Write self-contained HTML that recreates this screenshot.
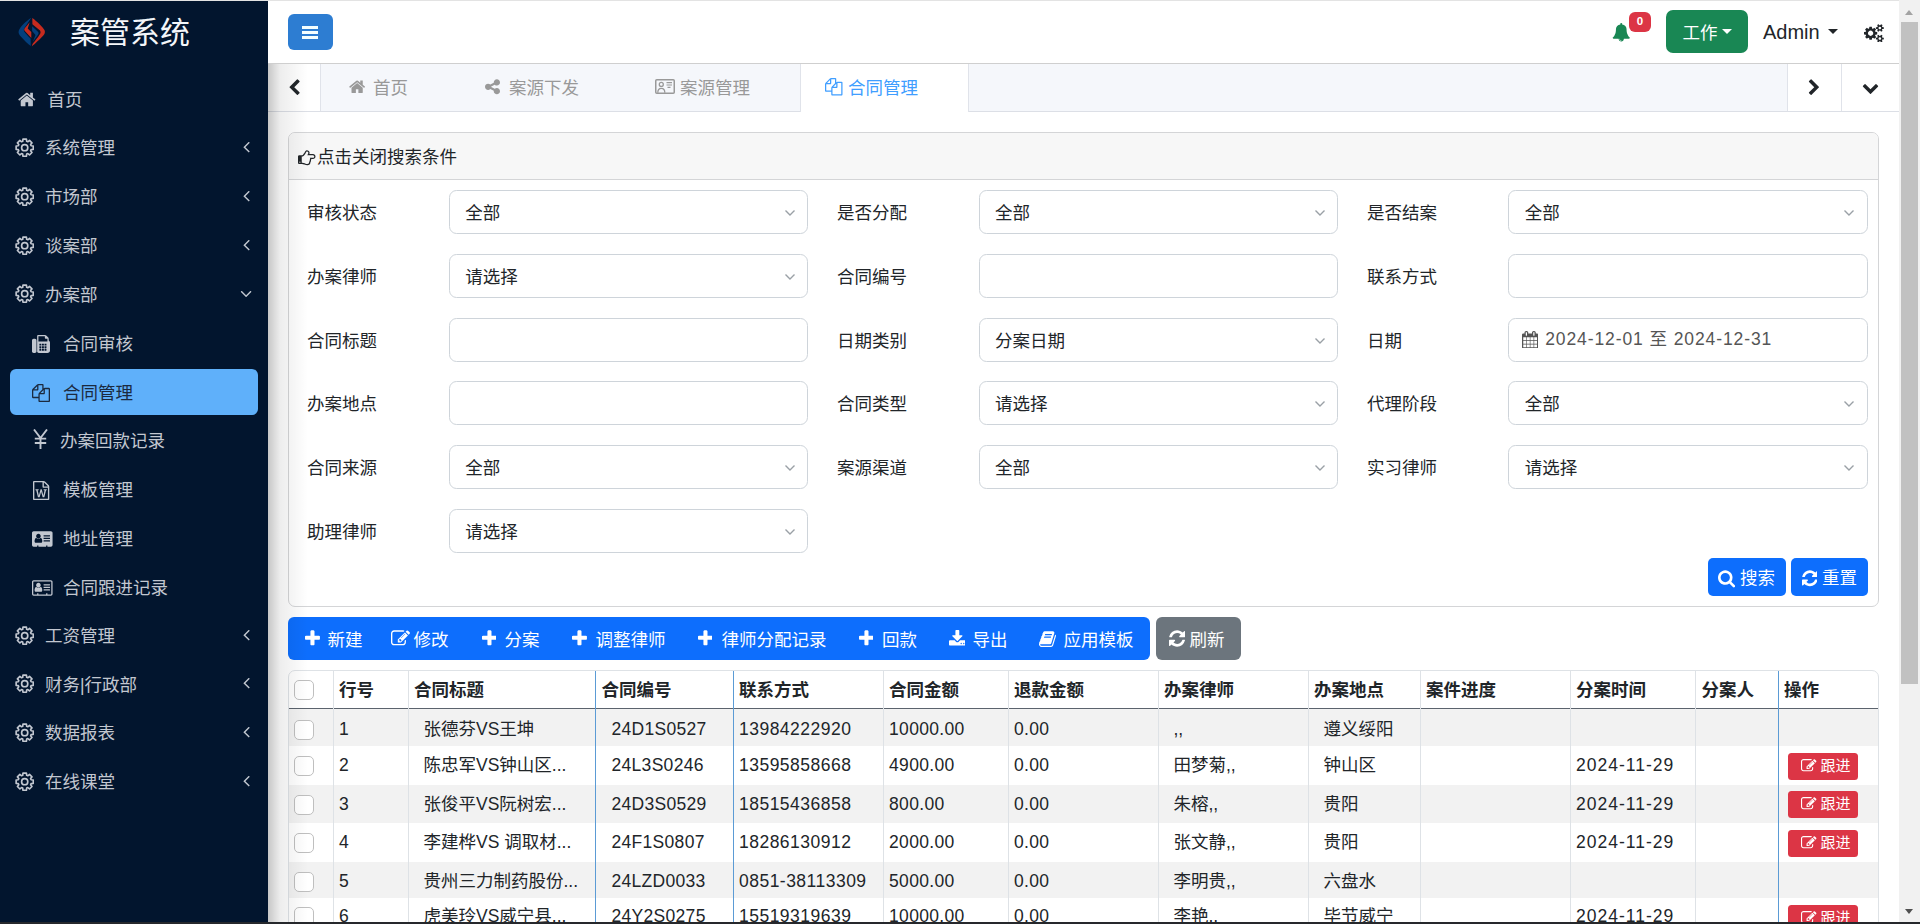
<!DOCTYPE html><html lang="zh-CN"><head><meta charset="utf-8"><title>案管系统</title><style>
*{box-sizing:border-box;margin:0;padding:0}
html,body{width:1920px;height:924px;overflow:hidden;background:#fff}
body{font-family:"Liberation Sans","Noto Sans CJK SC",sans-serif;font-size:17.5px;color:#212529;position:relative}
svg.fa{display:inline-block;vertical-align:middle;flex:none}
.abs{position:absolute}
.tx{margin-top:1px}
#topline{left:0;top:0;width:1920px;height:1px;background:#e3e3e3;z-index:50}
#side{left:0;top:0;width:268px;height:924px;background:#02152e;color:#c2c7d0;z-index:5}
#shadow{left:268px;top:64px;width:40px;height:861px;background:linear-gradient(90deg,rgba(0,0,0,.22),rgba(0,0,0,.07) 30%,rgba(0,0,0,0) 100%);z-index:8;pointer-events:none}
#brand{left:70px;top:11px;font-size:30px;color:#f4f6f9;line-height:44px;white-space:nowrap}
.nav{left:0;width:268px;height:48.75px;display:flex;align-items:center;white-space:nowrap}
.nav .t{position:absolute;top:0;line-height:48.75px}
.nav .ic{position:absolute;top:0;height:48.75px;display:flex;align-items:center}
.nav .arr{position:absolute;left:243.3px;top:-1px;height:48.75px;display:flex;align-items:center}
#act{left:10px;top:369px;width:248px;height:46px;border-radius:6px;background:#5fb0fa}
#hdr{left:268px;top:1px;width:1631px;height:62px;background:#fff;z-index:10}
#hdrline{left:268px;top:63px;width:1631px;height:1px;background:#cfcfcf;z-index:11}
#burger{left:288px;top:14px;width:45px;height:36px;border-radius:6px;background:#2d7dd2;z-index:12}
#burger i{position:absolute;left:14px;width:16px;height:3px;background:#f4ffff;display:block}
#tabs{left:268px;top:64px;width:1631px;height:47px;background:#f5f7fb;z-index:3}
#tabline{left:268px;top:111px;width:1631px;height:1px;background:#dcdfe6;z-index:3}
.tab{top:64px;height:47px;line-height:47px;color:#999;white-space:nowrap;z-index:6}

.hi{z-index:12}
#bell{left:1611.5px;top:21px;color:#198754}
#badge{left:1629px;top:12px;width:22px;height:20px;border-radius:6px;background:#dc3545;color:#fff;font-weight:bold;font-size:11.5px;line-height:18px;text-align:center}
#work{left:1666px;top:10px;width:82px;height:43px;border-radius:7px;background:#198754;color:#fff;line-height:43px;white-space:nowrap}
#work span{position:absolute;left:16.5px;top:1.5px}
#admin{left:1763px;top:11px;font-size:20px;line-height:43px;color:#212529;white-space:nowrap}
.caret{width:0;height:0;border-left:5px solid transparent;border-right:5px solid transparent;border-top:5px solid currentColor}
.vsep{top:64px;width:1px;height:47px;background:#e0e3ea;z-index:6}
.tw{top:64px;height:47px;background:#fff;z-index:5}
.tab svg{margin-right:0}
#panel{left:288px;top:132px;width:1591px;height:475px;border:1px solid #d4d5d7;border-radius:7px;background:#fff;z-index:1;overflow:hidden}
#phead{left:0;top:0;width:100%;height:47px;background:#f7f7f7;border-bottom:1px solid #d4d5d7}
.lbl{line-height:44px;white-space:nowrap;z-index:2;color:#212529}
.inp{width:359.4px;height:44px;border:1px solid #ced4da;border-radius:7.5px;background:#fff;z-index:2;line-height:42px;white-space:nowrap;color:#212529}
.inp .v{position:absolute;left:15.5px;top:1px}
.inp .chev{position:absolute;right:11.3px;top:18px;width:12px;height:8px}
.btn{z-index:2;border-radius:5px;color:#fff;white-space:nowrap}

#tbblue{left:288px;top:617px;width:862px;height:43px;border-radius:6px;background:#0d6efd;z-index:2}
#tbgray{left:1156px;top:617px;width:85px;height:43px;border-radius:6px;background:#6c757d;z-index:2}
.tbi{top:617px;height:43px;line-height:43px;color:#fff;z-index:3;white-space:nowrap}
#tbl{left:288px;top:670px;width:1591px;height:300px;border:1px solid #dee2e6;border-radius:7px 7px 0 0;z-index:1;background:#fff;overflow:hidden}
.row{left:0;width:1589px}
.thl{left:0;top:36.5px;width:1589px;height:1.7px;background:#5b636d}
.vl{top:0;width:1px;height:300px;background:#dee2e6;z-index:2}
.vb{background:#5b9bd5}
.th{top:671px;height:38px;line-height:38px;font-weight:bold;color:#212529;z-index:3;white-space:nowrap}
.td{height:36px;line-height:36px;color:#212529;z-index:3;white-space:nowrap}
.cb{left:294px;width:20px;height:20px;border:1px solid #bfbfbf;border-radius:5px;background:#fff;z-index:3}
.gj{left:1788px;width:70px;height:27px;border-radius:3.5px;background:#dc3545;color:#fff;font-size:15px;line-height:27px;z-index:3;white-space:nowrap}
#sb{left:1899px;top:0;width:21px;height:924px;background:#f1f1f1;z-index:60}
#sbt{left:1901px;top:22px;width:17px;height:662px;background:#c1c1c1;z-index:61}
#bottomline{left:0;top:922px;width:1920px;height:2px;background:#26282c;z-index:70}
</style></head><body><div id="topline" class="abs"></div><div id="side" class="abs"><svg class="abs" style="left:10px;top:8px" width="50" height="48" viewBox="0 0 50 48"><path fill="#043f7c" d="M21.3 9.7 C16 13 10 19 8.8 22.5 C8.1 25 9 26.7 11 28.7 C14 32 18 36 20.8 38.1 L20.6 30.5 C18 28 15.5 25.5 14.2 23.5 Q13.3 22 14.3 20.3 Z"/><path fill="#c62b1f" d="M22.3 9.9 C27 13.3 33 19 34.6 22.3 C35.4 24.5 34.6 26 33.1 27.8 C30 31 25 36 21.8 38.4 L22.5 36 C25 33 29 28 30.3 25.5 Q31 24 30 22.5 L22.4 16.2 Z"/><path fill="#c62b1f" d="M19.7 14.3 L14.5 20.5 Q13.8 21.7 14.6 22.8 L21.3 30.1 L21.3 24 L17.7 20.5 Z"/><path fill="#043f7c" d="M22.1 18.2 L28.2 24 Q29 25 28.3 26.2 L22.9 33.8 L25.5 27 L22.1 22.9 Z"/></svg><div id="brand" class="abs">案管系统</div><div id="act" class="abs"></div><div class="nav abs" style="top:74.60px;color:#c2c7d0"><span class="ic" style="left:18px;top:1px"><svg class="fa" width="17.64" height="19" viewBox="0 -1536 1664 1792" style=""><path fill="currentColor" transform="scale(1,-1)" d="M1408 544v-480q0 -26 -19 -45t-45 -19h-384v384h-256v-384h-384q-26 0 -45 19t-19 45v480q0 1 0.5 3t0.5 3l575 474l575 -474q1 -2 1 -6zM1631 613l-62 -74q-8 -9 -21 -11h-3q-13 0 -21 7l-692 577l-692 -577q-12 -8 -24 -7q-13 2 -21 11l-62 74q-8 10 -7 23.5t11 21.5 l719 599q32 26 76 26t76 -26l244 -204v195q0 14 9 23t23 9h192q14 0 23 -9t9 -23v-408l219 -182q10 -8 11 -21.5t-7 -23.5z"/></svg></span><span class="t tx" style="left:47.5px">首页</span></div><div class="nav abs" style="top:123.35px;color:#c2c7d0"><span class="ic" style="left:15px"><svg class="gear" width="19.4" height="19.4" viewBox="0 0 20 20"><path d="M7.96 3.41 L8.21 1.18 L11.79 1.18 L12.04 3.41 L13.22 3.90 L14.97 2.50 L17.50 5.03 L16.10 6.78 L16.59 7.96 L18.82 8.21 L18.82 11.79 L16.59 12.04 L16.10 13.22 L17.50 14.97 L14.97 17.50 L13.22 16.10 L12.04 16.59 L11.79 18.82 L8.21 18.82 L7.96 16.59 L6.78 16.10 L5.03 17.50 L2.50 14.97 L3.90 13.22 L3.41 12.04 L1.18 11.79 L1.18 8.21 L3.41 7.96 L3.90 6.78 L2.50 5.03 L5.03 2.50 L6.78 3.90Z" fill="none" stroke="currentColor" stroke-width="1.7" stroke-linejoin="round"/><circle cx="10" cy="10" r="3.2" fill="none" stroke="currentColor" stroke-width="1.7"/></svg></span><span class="t tx" style="left:45px">系统管理</span><span class="arr"><svg class="fa" width="6.79" height="19" viewBox="0 -1536 640 1792" style=""><path fill="currentColor" transform="scale(1,-1)" d="M627 992q0 -13 -10 -23l-393 -393l393 -393q10 -10 10 -23t-10 -23l-50 -50q-10 -10 -23 -10t-23 10l-466 466q-10 10 -10 23t10 23l466 466q10 10 23 10t23 -10l50 -50q10 -10 10 -23z"/></svg></span></div><div class="nav abs" style="top:172.10px;color:#c2c7d0"><span class="ic" style="left:15px"><svg class="gear" width="19.4" height="19.4" viewBox="0 0 20 20"><path d="M7.96 3.41 L8.21 1.18 L11.79 1.18 L12.04 3.41 L13.22 3.90 L14.97 2.50 L17.50 5.03 L16.10 6.78 L16.59 7.96 L18.82 8.21 L18.82 11.79 L16.59 12.04 L16.10 13.22 L17.50 14.97 L14.97 17.50 L13.22 16.10 L12.04 16.59 L11.79 18.82 L8.21 18.82 L7.96 16.59 L6.78 16.10 L5.03 17.50 L2.50 14.97 L3.90 13.22 L3.41 12.04 L1.18 11.79 L1.18 8.21 L3.41 7.96 L3.90 6.78 L2.50 5.03 L5.03 2.50 L6.78 3.90Z" fill="none" stroke="currentColor" stroke-width="1.7" stroke-linejoin="round"/><circle cx="10" cy="10" r="3.2" fill="none" stroke="currentColor" stroke-width="1.7"/></svg></span><span class="t tx" style="left:45px">市场部</span><span class="arr"><svg class="fa" width="6.79" height="19" viewBox="0 -1536 640 1792" style=""><path fill="currentColor" transform="scale(1,-1)" d="M627 992q0 -13 -10 -23l-393 -393l393 -393q10 -10 10 -23t-10 -23l-50 -50q-10 -10 -23 -10t-23 10l-466 466q-10 10 -10 23t10 23l466 466q10 10 23 10t23 -10l50 -50q10 -10 10 -23z"/></svg></span></div><div class="nav abs" style="top:220.85px;color:#c2c7d0"><span class="ic" style="left:15px"><svg class="gear" width="19.4" height="19.4" viewBox="0 0 20 20"><path d="M7.96 3.41 L8.21 1.18 L11.79 1.18 L12.04 3.41 L13.22 3.90 L14.97 2.50 L17.50 5.03 L16.10 6.78 L16.59 7.96 L18.82 8.21 L18.82 11.79 L16.59 12.04 L16.10 13.22 L17.50 14.97 L14.97 17.50 L13.22 16.10 L12.04 16.59 L11.79 18.82 L8.21 18.82 L7.96 16.59 L6.78 16.10 L5.03 17.50 L2.50 14.97 L3.90 13.22 L3.41 12.04 L1.18 11.79 L1.18 8.21 L3.41 7.96 L3.90 6.78 L2.50 5.03 L5.03 2.50 L6.78 3.90Z" fill="none" stroke="currentColor" stroke-width="1.7" stroke-linejoin="round"/><circle cx="10" cy="10" r="3.2" fill="none" stroke="currentColor" stroke-width="1.7"/></svg></span><span class="t tx" style="left:45px">谈案部</span><span class="arr"><svg class="fa" width="6.79" height="19" viewBox="0 -1536 640 1792" style=""><path fill="currentColor" transform="scale(1,-1)" d="M627 992q0 -13 -10 -23l-393 -393l393 -393q10 -10 10 -23t-10 -23l-50 -50q-10 -10 -23 -10t-23 10l-466 466q-10 10 -10 23t10 23l466 466q10 10 23 10t23 -10l50 -50q10 -10 10 -23z"/></svg></span></div><div class="nav abs" style="top:269.60px;color:#c2c7d0"><span class="ic" style="left:15px"><svg class="gear" width="19.4" height="19.4" viewBox="0 0 20 20"><path d="M7.96 3.41 L8.21 1.18 L11.79 1.18 L12.04 3.41 L13.22 3.90 L14.97 2.50 L17.50 5.03 L16.10 6.78 L16.59 7.96 L18.82 8.21 L18.82 11.79 L16.59 12.04 L16.10 13.22 L17.50 14.97 L14.97 17.50 L13.22 16.10 L12.04 16.59 L11.79 18.82 L8.21 18.82 L7.96 16.59 L6.78 16.10 L5.03 17.50 L2.50 14.97 L3.90 13.22 L3.41 12.04 L1.18 11.79 L1.18 8.21 L3.41 7.96 L3.90 6.78 L2.50 5.03 L5.03 2.50 L6.78 3.90Z" fill="none" stroke="currentColor" stroke-width="1.7" stroke-linejoin="round"/><circle cx="10" cy="10" r="3.2" fill="none" stroke="currentColor" stroke-width="1.7"/></svg></span><span class="t tx" style="left:45px">办案部</span><span class="arr" style="left:240.3px;top:0"><svg class="fa" width="12.21" height="19" viewBox="0 -1536 1152 1792" style=""><path fill="currentColor" transform="scale(1,-1)" d="M1075 800q0 -13 -10 -23l-466 -466q-10 -10 -23 -10t-23 10l-466 466q-10 10 -10 23t10 23l50 50q10 10 23 10t23 -10l393 -393l393 393q10 10 23 10t23 -10l50 -50q10 -10 10 -23z"/></svg></span></div><div class="nav abs" style="top:318.35px;color:#c2c7d0"><span class="ic" style="left:32px;top:1.2px"><svg class="fa" width="18.00" height="18" viewBox="0 -1536 1792 1792" style=""><path fill="currentColor" transform="scale(1,-1)" d="M288 1152q66 0 113 -47t47 -113v-1088q0 -66 -47 -113t-113 -47h-128q-66 0 -113 47t-47 113v1088q0 66 47 113t113 47h128zM1664 989q58 -34 93 -93t35 -128v-768q0 -106 -75 -181t-181 -75h-864q-66 0 -113 47t-47 113v1536q0 40 28 68t68 28h672q40 0 88 -20t76 -48 l152 -152q28 -28 48 -76t20 -88v-163zM928 0v128q0 14 -9 23t-23 9h-128q-14 0 -23 -9t-9 -23v-128q0 -14 9 -23t23 -9h128q14 0 23 9t9 23zM928 256v128q0 14 -9 23t-23 9h-128q-14 0 -23 -9t-9 -23v-128q0 -14 9 -23t23 -9h128q14 0 23 9t9 23zM928 512v128q0 14 -9 23 t-23 9h-128q-14 0 -23 -9t-9 -23v-128q0 -14 9 -23t23 -9h128q14 0 23 9t9 23zM1184 0v128q0 14 -9 23t-23 9h-128q-14 0 -23 -9t-9 -23v-128q0 -14 9 -23t23 -9h128q14 0 23 9t9 23zM1184 256v128q0 14 -9 23t-23 9h-128q-14 0 -23 -9t-9 -23v-128q0 -14 9 -23t23 -9h128 q14 0 23 9t9 23zM1184 512v128q0 14 -9 23t-23 9h-128q-14 0 -23 -9t-9 -23v-128q0 -14 9 -23t23 -9h128q14 0 23 9t9 23zM1440 0v128q0 14 -9 23t-23 9h-128q-14 0 -23 -9t-9 -23v-128q0 -14 9 -23t23 -9h128q14 0 23 9t9 23zM1440 256v128q0 14 -9 23t-23 9h-128 q-14 0 -23 -9t-9 -23v-128q0 -14 9 -23t23 -9h128q14 0 23 9t9 23zM1440 512v128q0 14 -9 23t-23 9h-128q-14 0 -23 -9t-9 -23v-128q0 -14 9 -23t23 -9h128q14 0 23 9t9 23zM1536 896v256h-160q-40 0 -68 28t-28 68v160h-640v-512h896z"/></svg></span><span class="t tx" style="left:63px;top:0.5px">合同审核</span></div><div class="nav abs" style="top:367.10px;color:#1b2a3f"><span class="ic" style="left:32px;top:1.2px"><svg class="fa" width="18.00" height="18" viewBox="0 -1536 1792 1792" style=""><path fill="currentColor" transform="scale(1,-1)" d="M1696 1152q40 0 68 -28t28 -68v-1216q0 -40 -28 -68t-68 -28h-960q-40 0 -68 28t-28 68v288h-544q-40 0 -68 28t-28 68v672q0 40 20 88t48 76l408 408q28 28 76 48t88 20h416q40 0 68 -28t28 -68v-328q68 40 128 40h416zM1152 939l-299 -299h299v299zM512 1323l-299 -299 h299v299zM708 676l316 316v416h-384v-416q0 -40 -28 -68t-68 -28h-416v-640h512v256q0 40 20 88t48 76zM1664 -128v1152h-384v-416q0 -40 -28 -68t-68 -28h-416v-640h896z"/></svg></span><span class="t tx" style="left:63px;top:0.5px">合同管理</span></div><div class="nav abs" style="top:415.85px;color:#c2c7d0"><span class="ic" style="left:32.5px;top:-0.8px"><svg class="fa" width="15" height="20" viewBox="0 0 15 20" fill="none" stroke="currentColor" stroke-width="1.9"><path d="M1 0.5 L7.5 9 L14 0.5 M7.5 9 V20 M1.8 9.6 H13.2 M1.8 14 H13.2"/></svg></span><span class="t tx" style="left:60px;top:0.5px">办案回款记录</span></div><div class="nav abs" style="top:464.60px;color:#c2c7d0"><span class="ic" style="left:33.3px;top:1.2px"><svg class="fa" width="16.29" height="19" viewBox="0 -1536 1536 1792" style=""><path fill="currentColor" transform="scale(1,-1)" d="M1468 1156q28 -28 48 -76t20 -88v-1152q0 -40 -28 -68t-68 -28h-1344q-40 0 -68 28t-28 68v1600q0 40 28 68t68 28h896q40 0 88 -20t76 -48zM1024 1400v-376h376q-10 29 -22 41l-313 313q-12 12 -41 22zM1408 -128v1024h-416q-40 0 -68 28t-28 68v416h-768v-1536h1280z M233 768v-107h70l164 -661h159l128 485q7 20 10 46q2 16 2 24h4l3 -24q1 -3 3.5 -20t5.5 -26l128 -485h159l164 661h70v107h-300v-107h90l-99 -438q-5 -20 -7 -46l-2 -21h-4q0 3 -0.5 6.5t-1.5 8t-1 6.5q-1 5 -4 21t-5 25l-144 545h-114l-144 -545q-2 -9 -4.5 -24.5 t-3.5 -21.5l-4 -21h-4l-2 21q-2 26 -7 46l-99 438h90v107h-300z"/></svg></span><span class="t tx" style="left:63px;top:0.5px">模板管理</span></div><div class="nav abs" style="top:513.35px;color:#c2c7d0"><span class="ic" style="left:32px;top:1.2px"><svg class="fa" width="20.57" height="18" viewBox="0 -1536 2048 1792" style=""><path fill="currentColor" transform="scale(1,-1)" d="M1024 405q0 64 -9 117.5t-29.5 103t-60.5 78t-97 28.5q-6 -4 -30 -18t-37.5 -21.5t-35.5 -17.5t-43 -14.5t-42 -4.5t-42 4.5t-43 14.5t-35.5 17.5t-37.5 21.5t-30 18q-57 0 -97 -28.5t-60.5 -78t-29.5 -103t-9 -117.5t37 -106.5t91 -42.5h512q54 0 91 42.5t37 106.5z M867 925q0 94 -66.5 160.5t-160.5 66.5t-160.5 -66.5t-66.5 -160.5t66.5 -160.5t160.5 -66.5t160.5 66.5t66.5 160.5zM1792 416v64q0 14 -9 23t-23 9h-576q-14 0 -23 -9t-9 -23v-64q0 -14 9 -23t23 -9h576q14 0 23 9t9 23zM1792 676v56q0 15 -10.5 25.5t-25.5 10.5h-568 q-15 0 -25.5 -10.5t-10.5 -25.5v-56q0 -15 10.5 -25.5t25.5 -10.5h568q15 0 25.5 10.5t10.5 25.5zM1792 928v64q0 14 -9 23t-23 9h-576q-14 0 -23 -9t-9 -23v-64q0 -14 9 -23t23 -9h576q14 0 23 9t9 23zM2048 1248v-1216q0 -66 -47 -113t-113 -47h-352v96q0 14 -9 23t-23 9 h-64q-14 0 -23 -9t-9 -23v-96h-768v96q0 14 -9 23t-23 9h-64q-14 0 -23 -9t-9 -23v-96h-352q-66 0 -113 47t-47 113v1216q0 66 47 113t113 47h1728q66 0 113 -47t47 -113z"/></svg></span><span class="t tx" style="left:63px;top:0.5px">地址管理</span></div><div class="nav abs" style="top:562.10px;color:#c2c7d0"><span class="ic" style="left:32px;top:1.2px"><svg class="fa" width="20.57" height="18" viewBox="0 -1536 2048 1792" style=""><path fill="currentColor" transform="scale(1,-1)" d="M1024 405q0 -64 -37 -106.5t-91 -42.5h-512q-54 0 -91 42.5t-37 106.5t9 117.5t29.5 103t60.5 78t97 28.5q6 -4 30 -18t37.5 -21.5t35.5 -17.5t43 -14.5t42 -4.5t42 4.5t43 14.5t35.5 17.5t37.5 21.5t30 18q57 0 97 -28.5t60.5 -78t29.5 -103t9 -117.5zM867 925 q0 -94 -66.5 -160.5t-160.5 -66.5t-160.5 66.5t-66.5 160.5t66.5 160.5t160.5 66.5t160.5 -66.5t66.5 -160.5zM1792 480v-64q0 -14 -9 -23t-23 -9h-576q-14 0 -23 9t-9 23v64q0 14 9 23t23 9h576q14 0 23 -9t9 -23zM1792 732v-56q0 -15 -10.5 -25.5t-25.5 -10.5h-568 q-15 0 -25.5 10.5t-10.5 25.5v56q0 15 10.5 25.5t25.5 10.5h568q15 0 25.5 -10.5t10.5 -25.5zM1792 992v-64q0 -14 -9 -23t-23 -9h-576q-14 0 -23 9t-9 23v64q0 14 9 23t23 9h576q14 0 23 -9t9 -23zM1920 32v1216q0 13 -9.5 22.5t-22.5 9.5h-1728q-13 0 -22.5 -9.5 t-9.5 -22.5v-1216q0 -13 9.5 -22.5t22.5 -9.5h352v96q0 14 9 23t23 9h64q14 0 23 -9t9 -23v-96h768v96q0 14 9 23t23 9h64q14 0 23 -9t9 -23v-96h352q13 0 22.5 9.5t9.5 22.5zM2048 1248v-1216q0 -66 -47 -113t-113 -47h-1728q-66 0 -113 47t-47 113v1216q0 66 47 113 t113 47h1728q66 0 113 -47t47 -113z"/></svg></span><span class="t tx" style="left:63px;top:0.5px">合同跟进记录</span></div><div class="nav abs" style="top:610.85px;color:#c2c7d0"><span class="ic" style="left:15px"><svg class="gear" width="19.4" height="19.4" viewBox="0 0 20 20"><path d="M7.96 3.41 L8.21 1.18 L11.79 1.18 L12.04 3.41 L13.22 3.90 L14.97 2.50 L17.50 5.03 L16.10 6.78 L16.59 7.96 L18.82 8.21 L18.82 11.79 L16.59 12.04 L16.10 13.22 L17.50 14.97 L14.97 17.50 L13.22 16.10 L12.04 16.59 L11.79 18.82 L8.21 18.82 L7.96 16.59 L6.78 16.10 L5.03 17.50 L2.50 14.97 L3.90 13.22 L3.41 12.04 L1.18 11.79 L1.18 8.21 L3.41 7.96 L3.90 6.78 L2.50 5.03 L5.03 2.50 L6.78 3.90Z" fill="none" stroke="currentColor" stroke-width="1.7" stroke-linejoin="round"/><circle cx="10" cy="10" r="3.2" fill="none" stroke="currentColor" stroke-width="1.7"/></svg></span><span class="t tx" style="left:45px">工资管理</span><span class="arr"><svg class="fa" width="6.79" height="19" viewBox="0 -1536 640 1792" style=""><path fill="currentColor" transform="scale(1,-1)" d="M627 992q0 -13 -10 -23l-393 -393l393 -393q10 -10 10 -23t-10 -23l-50 -50q-10 -10 -23 -10t-23 10l-466 466q-10 10 -10 23t10 23l466 466q10 10 23 10t23 -10l50 -50q10 -10 10 -23z"/></svg></span></div><div class="nav abs" style="top:659.60px;color:#c2c7d0"><span class="ic" style="left:15px"><svg class="gear" width="19.4" height="19.4" viewBox="0 0 20 20"><path d="M7.96 3.41 L8.21 1.18 L11.79 1.18 L12.04 3.41 L13.22 3.90 L14.97 2.50 L17.50 5.03 L16.10 6.78 L16.59 7.96 L18.82 8.21 L18.82 11.79 L16.59 12.04 L16.10 13.22 L17.50 14.97 L14.97 17.50 L13.22 16.10 L12.04 16.59 L11.79 18.82 L8.21 18.82 L7.96 16.59 L6.78 16.10 L5.03 17.50 L2.50 14.97 L3.90 13.22 L3.41 12.04 L1.18 11.79 L1.18 8.21 L3.41 7.96 L3.90 6.78 L2.50 5.03 L5.03 2.50 L6.78 3.90Z" fill="none" stroke="currentColor" stroke-width="1.7" stroke-linejoin="round"/><circle cx="10" cy="10" r="3.2" fill="none" stroke="currentColor" stroke-width="1.7"/></svg></span><span class="t tx" style="left:45px">财务|行政部</span><span class="arr"><svg class="fa" width="6.79" height="19" viewBox="0 -1536 640 1792" style=""><path fill="currentColor" transform="scale(1,-1)" d="M627 992q0 -13 -10 -23l-393 -393l393 -393q10 -10 10 -23t-10 -23l-50 -50q-10 -10 -23 -10t-23 10l-466 466q-10 10 -10 23t10 23l466 466q10 10 23 10t23 -10l50 -50q10 -10 10 -23z"/></svg></span></div><div class="nav abs" style="top:708.35px;color:#c2c7d0"><span class="ic" style="left:15px"><svg class="gear" width="19.4" height="19.4" viewBox="0 0 20 20"><path d="M7.96 3.41 L8.21 1.18 L11.79 1.18 L12.04 3.41 L13.22 3.90 L14.97 2.50 L17.50 5.03 L16.10 6.78 L16.59 7.96 L18.82 8.21 L18.82 11.79 L16.59 12.04 L16.10 13.22 L17.50 14.97 L14.97 17.50 L13.22 16.10 L12.04 16.59 L11.79 18.82 L8.21 18.82 L7.96 16.59 L6.78 16.10 L5.03 17.50 L2.50 14.97 L3.90 13.22 L3.41 12.04 L1.18 11.79 L1.18 8.21 L3.41 7.96 L3.90 6.78 L2.50 5.03 L5.03 2.50 L6.78 3.90Z" fill="none" stroke="currentColor" stroke-width="1.7" stroke-linejoin="round"/><circle cx="10" cy="10" r="3.2" fill="none" stroke="currentColor" stroke-width="1.7"/></svg></span><span class="t tx" style="left:45px">数据报表</span><span class="arr"><svg class="fa" width="6.79" height="19" viewBox="0 -1536 640 1792" style=""><path fill="currentColor" transform="scale(1,-1)" d="M627 992q0 -13 -10 -23l-393 -393l393 -393q10 -10 10 -23t-10 -23l-50 -50q-10 -10 -23 -10t-23 10l-466 466q-10 10 -10 23t10 23l466 466q10 10 23 10t23 -10l50 -50q10 -10 10 -23z"/></svg></span></div><div class="nav abs" style="top:757.10px;color:#c2c7d0"><span class="ic" style="left:15px"><svg class="gear" width="19.4" height="19.4" viewBox="0 0 20 20"><path d="M7.96 3.41 L8.21 1.18 L11.79 1.18 L12.04 3.41 L13.22 3.90 L14.97 2.50 L17.50 5.03 L16.10 6.78 L16.59 7.96 L18.82 8.21 L18.82 11.79 L16.59 12.04 L16.10 13.22 L17.50 14.97 L14.97 17.50 L13.22 16.10 L12.04 16.59 L11.79 18.82 L8.21 18.82 L7.96 16.59 L6.78 16.10 L5.03 17.50 L2.50 14.97 L3.90 13.22 L3.41 12.04 L1.18 11.79 L1.18 8.21 L3.41 7.96 L3.90 6.78 L2.50 5.03 L5.03 2.50 L6.78 3.90Z" fill="none" stroke="currentColor" stroke-width="1.7" stroke-linejoin="round"/><circle cx="10" cy="10" r="3.2" fill="none" stroke="currentColor" stroke-width="1.7"/></svg></span><span class="t tx" style="left:45px">在线课堂</span><span class="arr"><svg class="fa" width="6.79" height="19" viewBox="0 -1536 640 1792" style=""><path fill="currentColor" transform="scale(1,-1)" d="M627 992q0 -13 -10 -23l-393 -393l393 -393q10 -10 10 -23t-10 -23l-50 -50q-10 -10 -23 -10t-23 10l-466 466q-10 10 -10 23t10 23l466 466q10 10 23 10t23 -10l50 -50q10 -10 10 -23z"/></svg></span></div></div><div id="shadow" class="abs"></div><div id="hdr" class="abs"></div><div id="hdrline" class="abs"></div><div id="burger" class="abs"><i style="top:12px"></i><i style="top:17px"></i><i style="top:22px"></i></div><div id="tabs" class="abs"></div><div id="tabline" class="abs"></div><div id="bell" class="abs hi"><svg class="fa" width="18.50" height="18.5" viewBox="0 -1536 1792 1792" style=""><path fill="currentColor" transform="scale(1,-1)" d="M912 -160q0 16 -16 16q-59 0 -101.5 42.5t-42.5 101.5q0 16 -16 16t-16 -16q0 -73 51.5 -124.5t124.5 -51.5q16 0 16 16zM1728 128q0 -52 -38 -90t-90 -38h-448q0 -106 -75 -181t-181 -75t-181 75t-75 181h-448q-52 0 -90 38t-38 90q50 42 91 88t85 119.5t74.5 158.5 t50 206t19.5 260q0 152 117 282.5t307 158.5q-8 19 -8 39q0 40 28 68t68 28t68 -28t28 -68q0 -20 -8 -39q190 -28 307 -158.5t117 -282.5q0 -139 19.5 -260t50 -206t74.5 -158.5t85 -119.5t91 -88z"/></svg></div><div id="badge" class="abs hi">0</div><div id="work" class="abs hi"><span>工作</span><i class="caret abs" style="left:55.5px;top:19px;color:#fff"></i></div><div id="admin" class="abs hi">Admin</div><i class="caret abs hi" style="left:1828px;top:29px;color:#212529"></i><div class="abs hi" style="left:1864px;top:21.5px;color:#212529"><svg class="fa" width="19.82" height="18.5" viewBox="0 -1536 1920 1792" style=""><path fill="currentColor" transform="scale(1,-1)" d="M896 640q0 106 -75 181t-181 75t-181 -75t-75 -181t75 -181t181 -75t181 75t75 181zM1664 128q0 52 -38 90t-90 38t-90 -38t-38 -90q0 -53 37.5 -90.5t90.5 -37.5t90.5 37.5t37.5 90.5zM1664 1152q0 52 -38 90t-90 38t-90 -38t-38 -90q0 -53 37.5 -90.5t90.5 -37.5 t90.5 37.5t37.5 90.5zM1280 731v-185q0 -10 -7 -19.5t-16 -10.5l-155 -24q-11 -35 -32 -76q34 -48 90 -115q7 -11 7 -20q0 -12 -7 -19q-23 -30 -82.5 -89.5t-78.5 -59.5q-11 0 -21 7l-115 90q-37 -19 -77 -31q-11 -108 -23 -155q-7 -24 -30 -24h-186q-11 0 -20 7.5t-10 17.5 l-23 153q-34 10 -75 31l-118 -89q-7 -7 -20 -7q-11 0 -21 8q-144 133 -144 160q0 9 7 19q10 14 41 53t47 61q-23 44 -35 82l-152 24q-10 1 -17 9.5t-7 19.5v185q0 10 7 19.5t16 10.5l155 24q11 35 32 76q-34 48 -90 115q-7 11 -7 20q0 12 7 20q22 30 82 89t79 59q11 0 21 -7 l115 -90q34 18 77 32q11 108 23 154q7 24 30 24h186q11 0 20 -7.5t10 -17.5l23 -153q34 -10 75 -31l118 89q8 7 20 7q11 0 21 -8q144 -133 144 -160q0 -8 -7 -19q-12 -16 -42 -54t-45 -60q23 -48 34 -82l152 -23q10 -2 17 -10.5t7 -19.5zM1920 198v-140q0 -16 -149 -31 q-12 -27 -30 -52q51 -113 51 -138q0 -4 -4 -7q-122 -71 -124 -71q-8 0 -46 47t-52 68q-20 -2 -30 -2t-30 2q-14 -21 -52 -68t-46 -47q-2 0 -124 71q-4 3 -4 7q0 25 51 138q-18 25 -30 52q-149 15 -149 31v140q0 16 149 31q13 29 30 52q-51 113 -51 138q0 4 4 7q4 2 35 20 t59 34t30 16q8 0 46 -46.5t52 -67.5q20 2 30 2t30 -2q51 71 92 112l6 2q4 0 124 -70q4 -3 4 -7q0 -25 -51 -138q17 -23 30 -52q149 -15 149 -31zM1920 1222v-140q0 -16 -149 -31q-12 -27 -30 -52q51 -113 51 -138q0 -4 -4 -7q-122 -71 -124 -71q-8 0 -46 47t-52 68 q-20 -2 -30 -2t-30 2q-14 -21 -52 -68t-46 -47q-2 0 -124 71q-4 3 -4 7q0 25 51 138q-18 25 -30 52q-149 15 -149 31v140q0 16 149 31q13 29 30 52q-51 113 -51 138q0 4 4 7q4 2 35 20t59 34t30 16q8 0 46 -46.5t52 -67.5q20 2 30 2t30 -2q51 71 92 112l6 2q4 0 124 -70 q4 -3 4 -7q0 -25 -51 -138q17 -23 30 -52q149 -15 149 -31z"/></svg></div><div class="tw abs" style="left:268px;width:52px"></div><div class="vsep abs" style="left:320px"></div><div class="tw abs" style="left:800px;width:169px;height:48px;border-left:1px solid #e0e3ea;border-right:1px solid #e0e3ea"></div><div class="tw abs" style="left:1788px;width:111px"></div><div class="vsep abs" style="left:1787px"></div><div class="vsep abs" style="left:1841px"></div><div class="abs tab" style="left:288px;margin-top:-1px;color:#212529;z-index:9"><svg class="fa" width="12.50" height="17.5" viewBox="0 -1536 1280 1792" style=""><path fill="currentColor" transform="scale(1,-1)" d="M1171 1235l-531 -531l531 -531q19 -19 19 -45t-19 -45l-166 -166q-19 -19 -45 -19t-45 19l-742 742q-19 19 -19 45t19 45l742 742q19 19 45 19t45 -19l166 -166q19 -19 19 -45t-19 -45z"/></svg></div><div class="abs tab" style="left:1808px;margin-top:-1px;color:#212529;z-index:7"><svg class="fa" width="12.50" height="17.5" viewBox="0 -1536 1280 1792" style=""><path fill="currentColor" transform="scale(1,-1)" d="M1107 659l-742 -742q-19 -19 -45 -19t-45 19l-166 166q-19 19 -19 45t19 45l531 531l-531 531q-19 19 -19 45t19 45l166 166q19 19 45 19t45 -19l742 -742q19 -19 19 -45t-19 -45z"/></svg></div><div class="abs tab" style="left:1862px;margin-top:-0.5px;color:#212529;z-index:7"><svg class="fa" width="17.00" height="17" viewBox="0 -1536 1792 1792" style=""><path fill="currentColor" transform="scale(1,-1)" d="M1683 728l-742 -741q-19 -19 -45 -19t-45 19l-742 741q-19 19 -19 45.5t19 45.5l166 165q19 19 45 19t45 -19l531 -531l531 531q19 19 45 19t45 -19l166 -165q19 -19 19 -45.5t-19 -45.5z"/></svg></div><div class="abs tab" style="left:348.5px;margin-top:-1.5px;color:#999;z-index:7"><svg class="fa" width="16.25" height="17.5" viewBox="0 -1536 1664 1792" style=""><path fill="currentColor" transform="scale(1,-1)" d="M1408 544v-480q0 -26 -19 -45t-45 -19h-384v384h-256v-384h-384q-26 0 -45 19t-19 45v480q0 1 0.5 3t0.5 3l575 474l575 -474q1 -2 1 -6zM1631 613l-62 -74q-8 -9 -21 -11h-3q-13 0 -21 7l-692 577l-692 -577q-12 -8 -24 -7q-13 2 -21 11l-62 74q-8 10 -7 23.5t11 21.5 l719 599q32 26 76 26t76 -26l244 -204v195q0 14 9 23t23 9h192q14 0 23 -9t9 -23v-408l219 -182q10 -8 11 -21.5t-7 -23.5z"/></svg></div><div class="abs tab tx" style="left:373px;color:#999;z-index:7">首页</div><div class="abs tab" style="left:484.5px;margin-top:-1.5px;color:#999;z-index:7"><svg class="fa" width="15.00" height="17.5" viewBox="0 -1536 1536 1792" style=""><path fill="currentColor" transform="scale(1,-1)" d="M1216 512q133 0 226.5 -93.5t93.5 -226.5t-93.5 -226.5t-226.5 -93.5t-226.5 93.5t-93.5 226.5q0 12 2 34l-360 180q-92 -86 -218 -86q-133 0 -226.5 93.5t-93.5 226.5t93.5 226.5t226.5 93.5q126 0 218 -86l360 180q-2 22 -2 34q0 133 93.5 226.5t226.5 93.5 t226.5 -93.5t93.5 -226.5t-93.5 -226.5t-226.5 -93.5q-126 0 -218 86l-360 -180q2 -22 2 -34t-2 -34l360 -180q92 86 218 86z"/></svg></div><div class="abs tab tx" style="left:509px;color:#999;z-index:7">案源下发</div><div class="abs tab" style="left:654.5px;margin-top:-1.5px;color:#999;z-index:7"><svg class="fa" width="20" height="15" viewBox="0 0 20 15" fill="none" stroke="currentColor"><rect x="0.75" y="0.75" width="18.5" height="13.5" rx="1" stroke-width="1.5"/><circle cx="6.3" cy="5.4" r="2" stroke-width="1.3"/><path d="M2.8 13.8 Q2.8 9.4 6.3 9.4 Q9.8 9.4 9.8 13.8" stroke-width="1.3"/><path d="M11.5 3.6 H17 M11.5 6 H17 M12.5 8.4 H15.5" stroke-width="1.2"/></svg></div><div class="abs tab tx" style="left:680px;color:#999;z-index:7">案源管理</div><div class="abs tab" style="left:825px;margin-top:-1.5px;color:#409eff;z-index:7"><svg class="fa" width="17.50" height="17.5" viewBox="0 -1536 1792 1792" style=""><path fill="currentColor" transform="scale(1,-1)" d="M1696 1152q40 0 68 -28t28 -68v-1216q0 -40 -28 -68t-68 -28h-960q-40 0 -68 28t-28 68v288h-544q-40 0 -68 28t-28 68v672q0 40 20 88t48 76l408 408q28 28 76 48t88 20h416q40 0 68 -28t28 -68v-328q68 40 128 40h416zM1152 939l-299 -299h299v299zM512 1323l-299 -299 h299v299zM708 676l316 316v416h-384v-416q0 -40 -28 -68t-68 -28h-416v-640h512v256q0 40 20 88t48 76zM1664 -128v1152h-384v-416q0 -40 -28 -68t-68 -28h-416v-640h896z"/></svg></div><div class="abs tab tx" style="left:848px;color:#409eff;z-index:7">合同管理</div><div id="panel" class="abs"><div id="phead" class="abs"></div></div><div class="abs" style="left:298px;top:133px;line-height:47px;z-index:2;white-space:nowrap;color:#212529"><svg class="fa" width="17.50" height="17.5" viewBox="0 -1536 1792 1792" style=""><path fill="currentColor" transform="scale(1,-1)" d="M256 192q0 26 -19 45t-45 19t-45 -19t-19 -45t19 -45t45 -19t45 19t19 45zM1664 768q0 51 -39 89.5t-89 38.5h-576q0 20 15 48.5t33 55t33 68t15 84.5q0 67 -44.5 97.5t-115.5 30.5q-24 0 -90 -139q-24 -44 -37 -65q-40 -64 -112 -145q-71 -81 -101 -106 q-69 -57 -140 -57h-32v-640h32q72 0 167 -32t193.5 -64t179.5 -32q189 0 189 167q0 26 -5 56q30 16 47.5 52.5t17.5 73.5t-18 69q53 50 53 119q0 25 -10 55.5t-25 47.5h331q52 0 90 38t38 90zM1792 769q0 -105 -75.5 -181t-180.5 -76h-169q-4 -62 -37 -119q3 -21 3 -43 q0 -101 -60 -178q1 -139 -85 -219.5t-227 -80.5q-133 0 -322 69q-164 59 -223 59h-288q-53 0 -90.5 37.5t-37.5 90.5v640q0 53 37.5 90.5t90.5 37.5h288q10 0 21.5 4.5t23.5 14t22.5 18t24 22.5t20.5 21.5t19 21.5t14 17q65 74 100 129q13 21 33 62t37 72t40.5 63t55 49.5 t69.5 17.5q125 0 206.5 -67t81.5 -189q0 -68 -22 -128h374q104 0 180 -76t76 -179z"/></svg><span style="position:absolute;left:19px;top:1px">点击关闭搜索条件</span></div><div class="abs lbl tx" style="left:307px;top:190.00px">审核状态</div><div class="abs inp" style="left:448.7px;top:190.00px"><span class="v">全部</span><svg class="chev" viewBox="0 0 12 8"><path d="M1.5 1.5 L6 6 L10.5 1.5" fill="none" stroke="#9aa0a6" stroke-width="1.4"/></svg></div><div class="abs lbl tx" style="left:837px;top:190.00px">是否分配</div><div class="abs inp" style="left:978.5px;top:190.00px"><span class="v">全部</span><svg class="chev" viewBox="0 0 12 8"><path d="M1.5 1.5 L6 6 L10.5 1.5" fill="none" stroke="#9aa0a6" stroke-width="1.4"/></svg></div><div class="abs lbl tx" style="left:1367px;top:190.00px">是否结案</div><div class="abs inp" style="left:1508.2px;top:190.00px"><span class="v">全部</span><svg class="chev" viewBox="0 0 12 8"><path d="M1.5 1.5 L6 6 L10.5 1.5" fill="none" stroke="#9aa0a6" stroke-width="1.4"/></svg></div><div class="abs lbl tx" style="left:307px;top:253.75px">办案律师</div><div class="abs inp" style="left:448.7px;top:253.75px"><span class="v">请选择</span><svg class="chev" viewBox="0 0 12 8"><path d="M1.5 1.5 L6 6 L10.5 1.5" fill="none" stroke="#9aa0a6" stroke-width="1.4"/></svg></div><div class="abs lbl tx" style="left:837px;top:253.75px">合同编号</div><div class="abs inp" style="left:978.5px;top:253.75px"></div><div class="abs lbl tx" style="left:1367px;top:253.75px">联系方式</div><div class="abs inp" style="left:1508.2px;top:253.75px"></div><div class="abs lbl tx" style="left:307px;top:317.50px">合同标题</div><div class="abs inp" style="left:448.7px;top:317.50px"></div><div class="abs lbl tx" style="left:837px;top:317.50px">日期类别</div><div class="abs inp" style="left:978.5px;top:317.50px"><span class="v">分案日期</span><svg class="chev" viewBox="0 0 12 8"><path d="M1.5 1.5 L6 6 L10.5 1.5" fill="none" stroke="#9aa0a6" stroke-width="1.4"/></svg></div><div class="abs lbl tx" style="left:1367px;top:317.50px">日期</div><div class="abs inp" style="left:1508.2px;top:317.50px"><span class="v" style="left:13px;top:-1.5px;color:#555"><svg class="fa" width="16.25" height="17.5" viewBox="0 -1536 1664 1792" style=""><path fill="currentColor" transform="scale(1,-1)" d="M128 -128h288v288h-288v-288zM480 -128h320v288h-320v-288zM128 224h288v320h-288v-320zM480 224h320v320h-320v-320zM128 608h288v288h-288v-288zM864 -128h320v288h-320v-288zM480 608h320v288h-320v-288zM1248 -128h288v288h-288v-288zM864 224h320v320h-320v-320z M512 1088v288q0 13 -9.5 22.5t-22.5 9.5h-64q-13 0 -22.5 -9.5t-9.5 -22.5v-288q0 -13 9.5 -22.5t22.5 -9.5h64q13 0 22.5 9.5t9.5 22.5zM1248 224h288v320h-288v-320zM864 608h320v288h-320v-288zM1248 608h288v288h-288v-288zM1280 1088v288q0 13 -9.5 22.5t-22.5 9.5h-64 q-13 0 -22.5 -9.5t-9.5 -22.5v-288q0 -13 9.5 -22.5t22.5 -9.5h64q13 0 22.5 9.5t9.5 22.5zM1664 1152v-1280q0 -52 -38 -90t-90 -38h-1408q-52 0 -90 38t-38 90v1280q0 52 38 90t90 38h128v96q0 66 47 113t113 47h64q66 0 113 -47t47 -113v-96h384v96q0 66 47 113t113 47 h64q66 0 113 -47t47 -113v-96h128q52 0 90 -38t38 -90z"/></svg></span><span class="v" style="left:36px;top:-0.7px;color:#555;letter-spacing:0.9px">2024-12-01 至 2024-12-31</span></div><div class="abs lbl tx" style="left:307px;top:381.25px">办案地点</div><div class="abs inp" style="left:448.7px;top:381.25px"></div><div class="abs lbl tx" style="left:837px;top:381.25px">合同类型</div><div class="abs inp" style="left:978.5px;top:381.25px"><span class="v">请选择</span><svg class="chev" viewBox="0 0 12 8"><path d="M1.5 1.5 L6 6 L10.5 1.5" fill="none" stroke="#9aa0a6" stroke-width="1.4"/></svg></div><div class="abs lbl tx" style="left:1367px;top:381.25px">代理阶段</div><div class="abs inp" style="left:1508.2px;top:381.25px"><span class="v">全部</span><svg class="chev" viewBox="0 0 12 8"><path d="M1.5 1.5 L6 6 L10.5 1.5" fill="none" stroke="#9aa0a6" stroke-width="1.4"/></svg></div><div class="abs lbl tx" style="left:307px;top:445.00px">合同来源</div><div class="abs inp" style="left:448.7px;top:445.00px"><span class="v">全部</span><svg class="chev" viewBox="0 0 12 8"><path d="M1.5 1.5 L6 6 L10.5 1.5" fill="none" stroke="#9aa0a6" stroke-width="1.4"/></svg></div><div class="abs lbl tx" style="left:837px;top:445.00px">案源渠道</div><div class="abs inp" style="left:978.5px;top:445.00px"><span class="v">全部</span><svg class="chev" viewBox="0 0 12 8"><path d="M1.5 1.5 L6 6 L10.5 1.5" fill="none" stroke="#9aa0a6" stroke-width="1.4"/></svg></div><div class="abs lbl tx" style="left:1367px;top:445.00px">实习律师</div><div class="abs inp" style="left:1508.2px;top:445.00px"><span class="v">请选择</span><svg class="chev" viewBox="0 0 12 8"><path d="M1.5 1.5 L6 6 L10.5 1.5" fill="none" stroke="#9aa0a6" stroke-width="1.4"/></svg></div><div class="abs lbl tx" style="left:307px;top:508.75px">助理律师</div><div class="abs inp" style="left:448.7px;top:508.75px"><span class="v">请选择</span><svg class="chev" viewBox="0 0 12 8"><path d="M1.5 1.5 L6 6 L10.5 1.5" fill="none" stroke="#9aa0a6" stroke-width="1.4"/></svg></div><div class="abs btn" style="left:1708px;top:558px;width:78px;height:38px;background:#0d6efd;line-height:38px"><span style="position:absolute;left:10px;top:0"><svg class="fa" width="17.18" height="18.5" viewBox="0 -1536 1664 1792" style=""><path fill="currentColor" transform="scale(1,-1)" d="M1152 704q0 185 -131.5 316.5t-316.5 131.5t-316.5 -131.5t-131.5 -316.5t131.5 -316.5t316.5 -131.5t316.5 131.5t131.5 316.5zM1664 -128q0 -52 -38 -90t-90 -38q-54 0 -90 38l-343 342q-179 -124 -399 -124q-143 0 -273.5 55.5t-225 150t-150 225t-55.5 273.5 t55.5 273.5t150 225t225 150t273.5 55.5t273.5 -55.5t225 -150t150 -225t55.5 -273.5q0 -220 -124 -399l343 -343q37 -37 37 -90z"/></svg></span><span style="position:absolute;left:32px;top:1px">搜索</span></div><div class="abs btn" style="left:1791px;top:558px;width:77px;height:38px;background:#0d6efd;line-height:38px"><span style="position:absolute;left:10.5px;top:0"><svg class="fa" width="15.86" height="18.5" viewBox="0 -1536 1536 1792" style=""><path fill="currentColor" transform="scale(1,-1)" d="M1511 480q0 -5 -1 -7q-64 -268 -268 -434.5t-478 -166.5q-146 0 -282.5 55t-243.5 157l-129 -129q-19 -19 -45 -19t-45 19t-19 45v448q0 26 19 45t45 19h448q26 0 45 -19t19 -45t-19 -45l-137 -137q71 -66 161 -102t187 -36q134 0 250 65t186 179q11 17 53 117 q8 23 30 23h192q13 0 22.5 -9.5t9.5 -22.5zM1536 1280v-448q0 -26 -19 -45t-45 -19h-448q-26 0 -45 19t-19 45t19 45l138 138q-148 137 -349 137q-134 0 -250 -65t-186 -179q-11 -17 -53 -117q-8 -23 -30 -23h-199q-13 0 -22.5 9.5t-9.5 22.5v7q65 268 270 434.5t480 166.5 q146 0 284 -55.5t245 -156.5l130 129q19 19 45 19t45 -19t19 -45z"/></svg></span><span style="position:absolute;left:31px;top:1px">重置</span></div><div id="tbblue" class="abs"></div><div id="tbgray" class="abs"></div><div class="abs tbi" style="left:305px;margin-top:-0.5px"><svg class="fa" width="14.93" height="19" viewBox="0 -1536 1408 1792" style=""><path fill="currentColor" transform="scale(1,-1)" d="M1408 800v-192q0 -40 -28 -68t-68 -28h-416v-416q0 -40 -28 -68t-68 -28h-192q-40 0 -68 28t-28 68v416h-416q-40 0 -68 28t-28 68v192q0 40 28 68t68 28h416v416q0 40 28 68t68 28h192q40 0 68 -28t28 -68v-416h416q40 0 68 -28t28 -68z"/></svg></div><div class="abs tbi" style="left:327.5px;margin-top:1.5px">新建</div><div class="abs tbi" style="left:391px;margin-top:-0.5px"><svg class="fa" width="19.00" height="19" viewBox="0 -1536 1792 1792" style=""><path fill="currentColor" transform="scale(1,-1)" d="M888 352l116 116l-152 152l-116 -116v-56h96v-96h56zM1328 1072q-16 16 -33 -1l-350 -350q-17 -17 -1 -33t33 1l350 350q17 17 1 33zM1408 478v-190q0 -119 -84.5 -203.5t-203.5 -84.5h-832q-119 0 -203.5 84.5t-84.5 203.5v832q0 119 84.5 203.5t203.5 84.5h832 q63 0 117 -25q15 -7 18 -23q3 -17 -9 -29l-49 -49q-14 -14 -32 -8q-23 6 -45 6h-832q-66 0 -113 -47t-47 -113v-832q0 -66 47 -113t113 -47h832q66 0 113 47t47 113v126q0 13 9 22l64 64q15 15 35 7t20 -29zM1312 1216l288 -288l-672 -672h-288v288zM1756 1084l-92 -92 l-288 288l92 92q28 28 68 28t68 -28l152 -152q28 -28 28 -68t-28 -68z"/></svg></div><div class="abs tbi" style="left:413.5px;margin-top:1.5px">修改</div><div class="abs tbi" style="left:481.5px;margin-top:-0.5px"><svg class="fa" width="14.93" height="19" viewBox="0 -1536 1408 1792" style=""><path fill="currentColor" transform="scale(1,-1)" d="M1408 800v-192q0 -40 -28 -68t-68 -28h-416v-416q0 -40 -28 -68t-68 -28h-192q-40 0 -68 28t-28 68v416h-416q-40 0 -68 28t-28 68v192q0 40 28 68t68 28h416v416q0 40 28 68t68 28h192q40 0 68 -28t28 -68v-416h416q40 0 68 -28t28 -68z"/></svg></div><div class="abs tbi" style="left:504.5px;margin-top:1.5px">分案</div><div class="abs tbi" style="left:572px;margin-top:-0.5px"><svg class="fa" width="14.93" height="19" viewBox="0 -1536 1408 1792" style=""><path fill="currentColor" transform="scale(1,-1)" d="M1408 800v-192q0 -40 -28 -68t-68 -28h-416v-416q0 -40 -28 -68t-68 -28h-192q-40 0 -68 28t-28 68v416h-416q-40 0 -68 28t-28 68v192q0 40 28 68t68 28h416v416q0 40 28 68t68 28h192q40 0 68 -28t28 -68v-416h416q40 0 68 -28t28 -68z"/></svg></div><div class="abs tbi" style="left:595.5px;margin-top:1.5px">调整律师</div><div class="abs tbi" style="left:697.5px;margin-top:-0.5px"><svg class="fa" width="14.93" height="19" viewBox="0 -1536 1408 1792" style=""><path fill="currentColor" transform="scale(1,-1)" d="M1408 800v-192q0 -40 -28 -68t-68 -28h-416v-416q0 -40 -28 -68t-68 -28h-192q-40 0 -68 28t-28 68v416h-416q-40 0 -68 28t-28 68v192q0 40 28 68t68 28h416v416q0 40 28 68t68 28h192q40 0 68 -28t28 -68v-416h416q40 0 68 -28t28 -68z"/></svg></div><div class="abs tbi" style="left:721.5px;margin-top:1.5px">律师分配记录</div><div class="abs tbi" style="left:858.5px;margin-top:-0.5px"><svg class="fa" width="14.93" height="19" viewBox="0 -1536 1408 1792" style=""><path fill="currentColor" transform="scale(1,-1)" d="M1408 800v-192q0 -40 -28 -68t-68 -28h-416v-416q0 -40 -28 -68t-68 -28h-192q-40 0 -68 28t-28 68v416h-416q-40 0 -68 28t-28 68v192q0 40 28 68t68 28h416v416q0 40 28 68t68 28h192q40 0 68 -28t28 -68v-416h416q40 0 68 -28t28 -68z"/></svg></div><div class="abs tbi" style="left:882px;margin-top:1.5px">回款</div><div class="abs tbi" style="left:948.5px;margin-top:-0.5px"><svg class="fa" width="16.71" height="18" viewBox="0 -1536 1664 1792" style=""><path fill="currentColor" transform="scale(1,-1)" d="M1280 192q0 26 -19 45t-45 19t-45 -19t-19 -45t19 -45t45 -19t45 19t19 45zM1536 192q0 26 -19 45t-45 19t-45 -19t-19 -45t19 -45t45 -19t45 19t19 45zM1664 416v-320q0 -40 -28 -68t-68 -28h-1472q-40 0 -68 28t-28 68v320q0 40 28 68t68 28h465l135 -136 q58 -56 136 -56t136 56l136 136h464q40 0 68 -28t28 -68zM1339 985q17 -41 -14 -70l-448 -448q-18 -19 -45 -19t-45 19l-448 448q-31 29 -14 70q17 39 59 39h256v448q0 26 19 45t45 19h256q26 0 45 -19t19 -45v-448h256q42 0 59 -39z"/></svg></div><div class="abs tbi" style="left:972.5px;margin-top:1.5px">导出</div><div class="abs tbi" style="left:1039px;margin-top:-0.5px"><svg class="fa" width="16.99" height="18.3" viewBox="0 -1536 1664 1792" style=""><path fill="currentColor" transform="scale(1,-1)" d="M1639 1058q40 -57 18 -129l-275 -906q-19 -64 -76.5 -107.5t-122.5 -43.5h-923q-77 0 -148.5 53.5t-99.5 131.5q-24 67 -2 127q0 4 3 27t4 37q1 8 -3 21.5t-3 19.5q2 11 8 21t16.5 23.5t16.5 23.5q23 38 45 91.5t30 91.5q3 10 0.5 30t-0.5 28q3 11 17 28t17 23 q21 36 42 92t25 90q1 9 -2.5 32t0.5 28q4 13 22 30.5t22 22.5q19 26 42.5 84.5t27.5 96.5q1 8 -3 25.5t-2 26.5q2 8 9 18t18 23t17 21q8 12 16.5 30.5t15 35t16 36t19.5 32t26.5 23.5t36 11.5t47.5 -5.5l-1 -3q38 9 51 9h761q74 0 114 -56t18 -130l-274 -906 q-36 -119 -71.5 -153.5t-128.5 -34.5h-869q-27 0 -38 -15q-11 -16 -1 -43q24 -70 144 -70h923q29 0 56 15.5t35 41.5l300 987q7 22 5 57q38 -15 59 -43zM575 1056q-4 -13 2 -22.5t20 -9.5h608q13 0 25.5 9.5t16.5 22.5l21 64q4 13 -2 22.5t-20 9.5h-608q-13 0 -25.5 -9.5 t-16.5 -22.5zM492 800q-4 -13 2 -22.5t20 -9.5h608q13 0 25.5 9.5t16.5 22.5l21 64q4 13 -2 22.5t-20 9.5h-608q-13 0 -25.5 -9.5t-16.5 -22.5z"/></svg></div><div class="abs tbi" style="left:1063.5px;margin-top:1.5px">应用模板</div><div class="abs tbi" style="left:1169px;margin-top:-0.5px"><svg class="fa" width="16.29" height="19" viewBox="0 -1536 1536 1792" style=""><path fill="currentColor" transform="scale(1,-1)" d="M1511 480q0 -5 -1 -7q-64 -268 -268 -434.5t-478 -166.5q-146 0 -282.5 55t-243.5 157l-129 -129q-19 -19 -45 -19t-45 19t-19 45v448q0 26 19 45t45 19h448q26 0 45 -19t19 -45t-19 -45l-137 -137q71 -66 161 -102t187 -36q134 0 250 65t186 179q11 17 53 117 q8 23 30 23h192q13 0 22.5 -9.5t9.5 -22.5zM1536 1280v-448q0 -26 -19 -45t-45 -19h-448q-26 0 -45 19t-19 45t19 45l138 138q-148 137 -349 137q-134 0 -250 -65t-186 -179q-11 -17 -53 -117q-8 -23 -30 -23h-199q-13 0 -22.5 9.5t-9.5 22.5v7q65 268 270 434.5t480 166.5 q146 0 284 -55.5t245 -156.5l130 129q19 19 45 19t45 -19t19 -45z"/></svg></div><div class="abs tbi" style="left:1189.5px;margin-top:1.5px">刷新</div><div id="tbl" class="abs"><div class="abs row" style="top:38px;height:36.5px;background:#f2f2f2"></div><div class="abs row" style="top:74.5px;height:39.0px;background:#fff"></div><div class="abs row" style="top:113.5px;height:38.5px;background:#f2f2f2"></div><div class="abs row" style="top:152px;height:38.5px;background:#fff"></div><div class="abs row" style="top:190.5px;height:36.5px;background:#f2f2f2"></div><div class="abs row" style="top:227px;height:38px;background:#fff"></div><div class="abs thl"></div><div class="abs vl" style="left:44px"></div><div class="abs vl" style="left:119px"></div><div class="abs vl vb" style="left:306px"></div><div class="abs vl vb" style="left:444px"></div><div class="abs vl" style="left:594px"></div><div class="abs vl" style="left:719px"></div><div class="abs vl" style="left:869px"></div><div class="abs vl" style="left:1019px"></div><div class="abs vl" style="left:1131px"></div><div class="abs vl" style="left:1281px"></div><div class="abs vl" style="left:1406px"></div><div class="abs vl vb" style="left:1489px"></div></div><div class="abs th" style="left:339px">行号</div><div class="abs th" style="left:414px">合同标题</div><div class="abs th" style="left:601.5px">合同编号</div><div class="abs th" style="left:739px">联系方式</div><div class="abs th" style="left:889px">合同金额</div><div class="abs th" style="left:1014px">退款金额</div><div class="abs th" style="left:1164px">办案律师</div><div class="abs th" style="left:1314px">办案地点</div><div class="abs th" style="left:1426px">案件进度</div><div class="abs th" style="left:1576px">分案时间</div><div class="abs th" style="left:1701.5px">分案人</div><div class="abs th" style="left:1784px">操作</div><div class="abs cb" style="top:680px"></div><div class="abs cb" style="top:719.6px"></div><div class="abs td" style="left:339px;top:710.6px">1</div><div class="abs td" style="left:423.5px;top:710.6px">张德芬VS王坤</div><div class="abs td" style="left:611.5px;top:710.6px;letter-spacing:0.3px">24D1S0527</div><div class="abs td" style="left:739px;top:710.6px;letter-spacing:0.48px">13984222920</div><div class="abs td" style="left:889px;top:710.6px;letter-spacing:0.33px">10000.00</div><div class="abs td" style="left:1014px;top:710.6px;letter-spacing:0.33px">0.00</div><div class="abs td" style="left:1173.5px;top:710.6px">,,</div><div class="abs td" style="left:1323.5px;top:710.6px">遵义绥阳</div><div class="abs cb" style="top:756.0px"></div><div class="abs td" style="left:339px;top:747.0px">2</div><div class="abs td" style="left:423.5px;top:747.0px">陈忠军VS钟山区...</div><div class="abs td" style="left:611.5px;top:747.0px;letter-spacing:0.3px">24L3S0246</div><div class="abs td" style="left:739px;top:747.0px;letter-spacing:0.48px">13595858668</div><div class="abs td" style="left:889px;top:747.0px;letter-spacing:0.33px">4900.00</div><div class="abs td" style="left:1014px;top:747.0px;letter-spacing:0.33px">0.00</div><div class="abs td" style="left:1173.5px;top:747.0px">田梦菊,,</div><div class="abs td" style="left:1323.5px;top:747.0px">钟山区</div><div class="abs td" style="left:1576px;top:747.0px;letter-spacing:1.0px">2024-11-29</div><div class="abs gj" style="top:753px"><span style="position:absolute;left:13px;top:-2.2px"><svg class="fa" width="15.50" height="15.5" viewBox="0 -1536 1792 1792" style=""><path fill="currentColor" transform="scale(1,-1)" d="M888 352l116 116l-152 152l-116 -116v-56h96v-96h56zM1328 1072q-16 16 -33 -1l-350 -350q-17 -17 -1 -33t33 1l350 350q17 17 1 33zM1408 478v-190q0 -119 -84.5 -203.5t-203.5 -84.5h-832q-119 0 -203.5 84.5t-84.5 203.5v832q0 119 84.5 203.5t203.5 84.5h832 q63 0 117 -25q15 -7 18 -23q3 -17 -9 -29l-49 -49q-14 -14 -32 -8q-23 6 -45 6h-832q-66 0 -113 -47t-47 -113v-832q0 -66 47 -113t113 -47h832q66 0 113 47t47 113v126q0 13 9 22l64 64q15 15 35 7t20 -29zM1312 1216l288 -288l-672 -672h-288v288zM1756 1084l-92 -92 l-288 288l92 92q28 28 68 28t68 -28l152 -152q28 -28 28 -68t-28 -68z"/></svg></span><span style="position:absolute;left:32.5px;top:-1px">跟进</span></div><div class="abs cb" style="top:794.8px"></div><div class="abs td" style="left:339px;top:785.8px">3</div><div class="abs td" style="left:423.5px;top:785.8px">张俊平VS阮树宏...</div><div class="abs td" style="left:611.5px;top:785.8px;letter-spacing:0.3px">24D3S0529</div><div class="abs td" style="left:739px;top:785.8px;letter-spacing:0.48px">18515436858</div><div class="abs td" style="left:889px;top:785.8px;letter-spacing:0.33px">800.00</div><div class="abs td" style="left:1014px;top:785.8px;letter-spacing:0.33px">0.00</div><div class="abs td" style="left:1173.5px;top:785.8px">朱榕,,</div><div class="abs td" style="left:1323.5px;top:785.8px">贵阳</div><div class="abs td" style="left:1576px;top:785.8px;letter-spacing:1.0px">2024-11-29</div><div class="abs gj" style="top:791.3px"><span style="position:absolute;left:13px;top:-2.2px"><svg class="fa" width="15.50" height="15.5" viewBox="0 -1536 1792 1792" style=""><path fill="currentColor" transform="scale(1,-1)" d="M888 352l116 116l-152 152l-116 -116v-56h96v-96h56zM1328 1072q-16 16 -33 -1l-350 -350q-17 -17 -1 -33t33 1l350 350q17 17 1 33zM1408 478v-190q0 -119 -84.5 -203.5t-203.5 -84.5h-832q-119 0 -203.5 84.5t-84.5 203.5v832q0 119 84.5 203.5t203.5 84.5h832 q63 0 117 -25q15 -7 18 -23q3 -17 -9 -29l-49 -49q-14 -14 -32 -8q-23 6 -45 6h-832q-66 0 -113 -47t-47 -113v-832q0 -66 47 -113t113 -47h832q66 0 113 47t47 113v126q0 13 9 22l64 64q15 15 35 7t20 -29zM1312 1216l288 -288l-672 -672h-288v288zM1756 1084l-92 -92 l-288 288l92 92q28 28 68 28t68 -28l152 -152q28 -28 28 -68t-28 -68z"/></svg></span><span style="position:absolute;left:32.5px;top:-1px">跟进</span></div><div class="abs cb" style="top:833.0px"></div><div class="abs td" style="left:339px;top:824.0px">4</div><div class="abs td" style="left:423.5px;top:824.0px">李建桦VS 调取材...</div><div class="abs td" style="left:611.5px;top:824.0px;letter-spacing:0.3px">24F1S0807</div><div class="abs td" style="left:739px;top:824.0px;letter-spacing:0.48px">18286130912</div><div class="abs td" style="left:889px;top:824.0px;letter-spacing:0.33px">2000.00</div><div class="abs td" style="left:1014px;top:824.0px;letter-spacing:0.33px">0.00</div><div class="abs td" style="left:1173.5px;top:824.0px">张文静,,</div><div class="abs td" style="left:1323.5px;top:824.0px">贵阳</div><div class="abs td" style="left:1576px;top:824.0px;letter-spacing:1.0px">2024-11-29</div><div class="abs gj" style="top:830px"><span style="position:absolute;left:13px;top:-2.2px"><svg class="fa" width="15.50" height="15.5" viewBox="0 -1536 1792 1792" style=""><path fill="currentColor" transform="scale(1,-1)" d="M888 352l116 116l-152 152l-116 -116v-56h96v-96h56zM1328 1072q-16 16 -33 -1l-350 -350q-17 -17 -1 -33t33 1l350 350q17 17 1 33zM1408 478v-190q0 -119 -84.5 -203.5t-203.5 -84.5h-832q-119 0 -203.5 84.5t-84.5 203.5v832q0 119 84.5 203.5t203.5 84.5h832 q63 0 117 -25q15 -7 18 -23q3 -17 -9 -29l-49 -49q-14 -14 -32 -8q-23 6 -45 6h-832q-66 0 -113 -47t-47 -113v-832q0 -66 47 -113t113 -47h832q66 0 113 47t47 113v126q0 13 9 22l64 64q15 15 35 7t20 -29zM1312 1216l288 -288l-672 -672h-288v288zM1756 1084l-92 -92 l-288 288l92 92q28 28 68 28t68 -28l152 -152q28 -28 28 -68t-28 -68z"/></svg></span><span style="position:absolute;left:32.5px;top:-1px">跟进</span></div><div class="abs cb" style="top:871.6px"></div><div class="abs td" style="left:339px;top:862.6px">5</div><div class="abs td" style="left:423.5px;top:862.6px">贵州三力制药股份...</div><div class="abs td" style="left:611.5px;top:862.6px;letter-spacing:0.3px">24LZD0033</div><div class="abs td" style="left:739px;top:862.6px;letter-spacing:0.48px">0851-38113309</div><div class="abs td" style="left:889px;top:862.6px;letter-spacing:0.33px">5000.00</div><div class="abs td" style="left:1014px;top:862.6px;letter-spacing:0.33px">0.00</div><div class="abs td" style="left:1173.5px;top:862.6px">李明贵,,</div><div class="abs td" style="left:1323.5px;top:862.6px">六盘水</div><div class="abs cb" style="top:906.6px"></div><div class="abs td" style="left:339px;top:897.6px">6</div><div class="abs td" style="left:423.5px;top:897.6px">虎美玲VS威宁县...</div><div class="abs td" style="left:611.5px;top:897.6px;letter-spacing:0.3px">24Y2S0275</div><div class="abs td" style="left:739px;top:897.6px;letter-spacing:0.48px">15519319639</div><div class="abs td" style="left:889px;top:897.6px;letter-spacing:0.33px">10000.00</div><div class="abs td" style="left:1014px;top:897.6px;letter-spacing:0.33px">0.00</div><div class="abs td" style="left:1173.5px;top:897.6px">李艳,,</div><div class="abs td" style="left:1323.5px;top:897.6px">毕节威宁</div><div class="abs td" style="left:1576px;top:897.6px;letter-spacing:1.0px">2024-11-29</div><div class="abs gj" style="top:905px"><span style="position:absolute;left:13px;top:-2.2px"><svg class="fa" width="15.50" height="15.5" viewBox="0 -1536 1792 1792" style=""><path fill="currentColor" transform="scale(1,-1)" d="M888 352l116 116l-152 152l-116 -116v-56h96v-96h56zM1328 1072q-16 16 -33 -1l-350 -350q-17 -17 -1 -33t33 1l350 350q17 17 1 33zM1408 478v-190q0 -119 -84.5 -203.5t-203.5 -84.5h-832q-119 0 -203.5 84.5t-84.5 203.5v832q0 119 84.5 203.5t203.5 84.5h832 q63 0 117 -25q15 -7 18 -23q3 -17 -9 -29l-49 -49q-14 -14 -32 -8q-23 6 -45 6h-832q-66 0 -113 -47t-47 -113v-832q0 -66 47 -113t113 -47h832q66 0 113 47t47 113v126q0 13 9 22l64 64q15 15 35 7t20 -29zM1312 1216l288 -288l-672 -672h-288v288zM1756 1084l-92 -92 l-288 288l92 92q28 28 68 28t68 -28l152 -152q28 -28 28 -68t-28 -68z"/></svg></span><span style="position:absolute;left:32.5px;top:-1px">跟进</span></div><div id="sb" class="abs"></div><div id="sbt" class="abs"></div><i class="abs" style="left:1905px;top:10px;width:0;height:0;border-left:4.5px solid transparent;border-right:4.5px solid transparent;border-bottom:5px solid #a3a3a3;z-index:62"></i><i class="abs" style="left:1905px;top:909px;width:0;height:0;border-left:4.5px solid transparent;border-right:4.5px solid transparent;border-top:5px solid #505050;z-index:62"></i><div id="bottomline" class="abs"></div></body></html>
